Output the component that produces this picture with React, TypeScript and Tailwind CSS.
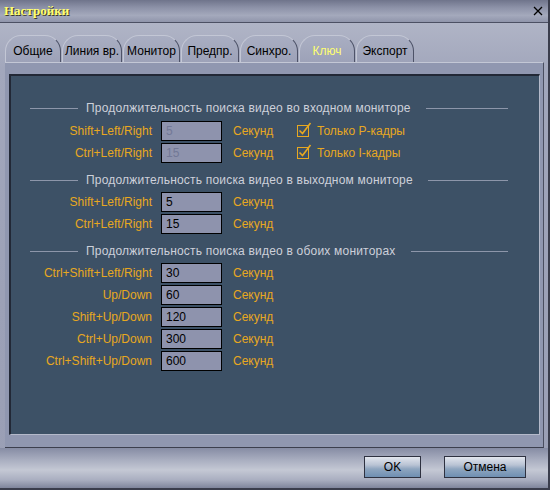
import React from 'react'

const tabs = [
  { title: 'Общие', w: 56 },
  { title: 'Линия вр.', w: 60 },
  { title: 'Монитор', w: 57 },
  { title: 'Предпр.', w: 58 },
  { title: 'Синхро.', w: 58 },
  { title: 'Ключ', w: 56, active: true },
  { title: 'Экспорт', w: 58 },
]

interface Row {
  label: string
  value: string
  disabled?: boolean
  check?: string
}

const section1: Row[] = [
  { label: 'Shift+Left/Right', value: '5', disabled: true, check: 'Только P-кадры' },
  { label: 'Ctrl+Left/Right', value: '15', disabled: true, check: 'Только I-кадры' },
]

const section2: Row[] = [
  { label: 'Shift+Left/Right', value: '5' },
  { label: 'Ctrl+Left/Right', value: '15' },
]

const section3: Row[] = [
  { label: 'Ctrl+Shift+Left/Right', value: '30' },
  { label: 'Up/Down', value: '60' },
  { label: 'Shift+Up/Down', value: '120' },
  { label: 'Ctrl+Up/Down', value: '300' },
  { label: 'Ctrl+Shift+Up/Down', value: '600' },
]

const CheckIcon: React.FC = () => (
  <svg width="15" height="16" viewBox="0 0 15 16" className="shrink-0">
    <rect x="0.5" y="4.5" width="11" height="11" fill="none" stroke="#e8a820" strokeWidth="1" />
    <path d="M2.5 9.5 L5.5 12.5 L13.5 2" fill="none" stroke="#e8a820" strokeWidth="1.6" />
  </svg>
)

const Heading: React.FC<{ text: string; className?: string }> = ({ text, className }) => (
  <div className={`flex items-center h-[14px] pl-[19px] pr-[31px] ${className ?? ''}`}>
    <div className="w-[48px] h-px bg-[#8d96aa]" />
    <span className="ml-[8px] mr-[15px] whitespace-nowrap tracking-[0.2px] text-[#cdd0da]">{text}</span>
    <div className="flex-1 h-px bg-[#8d96aa]" />
  </div>
)

const KeyRow: React.FC<{ row: Row }> = ({ row }) => (
  <div className="flex items-center h-[20px]">
    <div className="w-[141px] text-right text-[#e8a820] whitespace-nowrap">{row.label}</div>
    <div
      className={`ml-[9px] w-[61px] h-[20px] border border-black bg-[#8e93ad] pl-[4px] leading-[18px] ${
        row.disabled ? 'text-[#727896]' : 'text-black'
      }`}
    >
      {row.value}
    </div>
    <div className="ml-[11px] w-[64px] text-[#e8a820]">Секунд</div>
    {row.check && (
      <div className="flex items-center gap-[5px] -mt-[4px]">
        <CheckIcon />
        <span className="text-[#e8a820] mt-[4px]">{row.check}</span>
      </div>
    )}
  </div>
)

export default function App() {
  return (
    <div
      className="w-[550px] h-[490px] flex flex-col overflow-hidden text-[12px] leading-[14px] border-r-2 border-b-2 border-[#3a3d4c] bg-[linear-gradient(180deg,#b7bbcb_0%,#a2a7bc_14%,#9ca1b7_60%,#9a9fb5_100%)]"
      style={{ fontFamily: '"Liberation Sans", Arial, sans-serif' }}
    >
      {/* Title bar */}
      <div className="h-[23px] shrink-0 flex items-center justify-between pl-[4px] pr-[5px] border-b border-[#4c5063] bg-[linear-gradient(180deg,#6f748b_0%,#8d92a8_35%,#a4a9bc_70%,#9095ab_100%)]">
        <span
          className="text-[13px] font-bold text-[#ffff70] [text-shadow:1px_1px_0_#3a3a2a]"
          style={{ fontFamily: '"Liberation Serif", "Times New Roman", serif' }}
        >
          Настройки
        </span>
        <svg width="10" height="10" viewBox="0 0 10 10">
          <path d="M1 1 L9 9 M9 1 L1 9" stroke="#000" strokeWidth="1.3" />
        </svg>
      </div>

      {/* Tabs */}
      <div className="mt-[12px] h-[27px] shrink-0 flex items-end pl-[5px]">
        {tabs.map(t => (
          <div
            key={t.title}
            style={{ width: t.w }}
            className={`h-[27px] mr-[1px] flex items-end justify-center pb-[4px] rounded-t-[16px] border-t border-l border-[#c3c7d5] border-r-[#4e5368] border-r bg-[linear-gradient(180deg,#a9aec2_0%,#9da2b8_100%)] whitespace-nowrap ${
              t.active ? 'text-[#ffff70]' : 'text-black'
            }`}
          >
            {t.title}
          </div>
        ))}
      </div>

      {/* Panel */}
      <div className="mx-[5px] w-[539px] h-[386px] shrink-0 border-t border-[#c3c7d5] border-r border-r-[#4a4e60] border-b border-b-[#3c3f4e] bg-[#9097b0] pt-[11px] pl-[4px] pr-[3px] pb-[12px] flex">
        <div className="flex-1 flex flex-col bg-[#3d5166] border-t-2 border-l-2 border-[#222836] border-r border-b border-r-[#b4b9ca] border-b-[#b4b9ca]">
          <Heading text="Продолжительность поиска видео во входном  мониторе" className="mt-[25px]" />
          <div className="mt-[6px] flex flex-col gap-[2px]">
            {section1.map(r => (
              <KeyRow key={r.label} row={r} />
            ))}
          </div>
          <Heading text="Продолжительность поиска видео в выходном мониторе" className="mt-[10px]" />
          <div className="mt-[5px] flex flex-col gap-[2px]">
            {section2.map(r => (
              <KeyRow key={r.label} row={r} />
            ))}
          </div>
          <Heading text="Продолжительность поиска видео в обоих мониторах" className="mt-[10px]" />
          <div className="mt-[5px] flex flex-col gap-[2px]">
            {section3.map(r => (
              <KeyRow key={r.label} row={r} />
            ))}
          </div>
        </div>
      </div>

      {/* Footer */}
      <div className="flex-1 flex justify-end items-start pt-[8px] pr-[22px] gap-[23px] bg-[linear-gradient(180deg,#868ca4_0%,#a9aec0_30%,#c4c8d4_55%,#a9aec0_80%,#7f859c_100%)]">
        <button className="w-[57px] h-[22px] border border-[#2e3140] bg-[linear-gradient(180deg,#e2e6ee_0%,#b9c3d4_40%,#8ea5bf_60%,#6f8fb2_100%)] text-black text-[12px] leading-[20px]">
          OK
        </button>
        <button className="w-[82px] h-[22px] border border-[#2e3140] bg-[linear-gradient(180deg,#e2e6ee_0%,#b9c3d4_40%,#8ea5bf_60%,#6f8fb2_100%)] text-black text-[12px] leading-[20px]">
          Отмена
        </button>
      </div>
    </div>
  )
}
